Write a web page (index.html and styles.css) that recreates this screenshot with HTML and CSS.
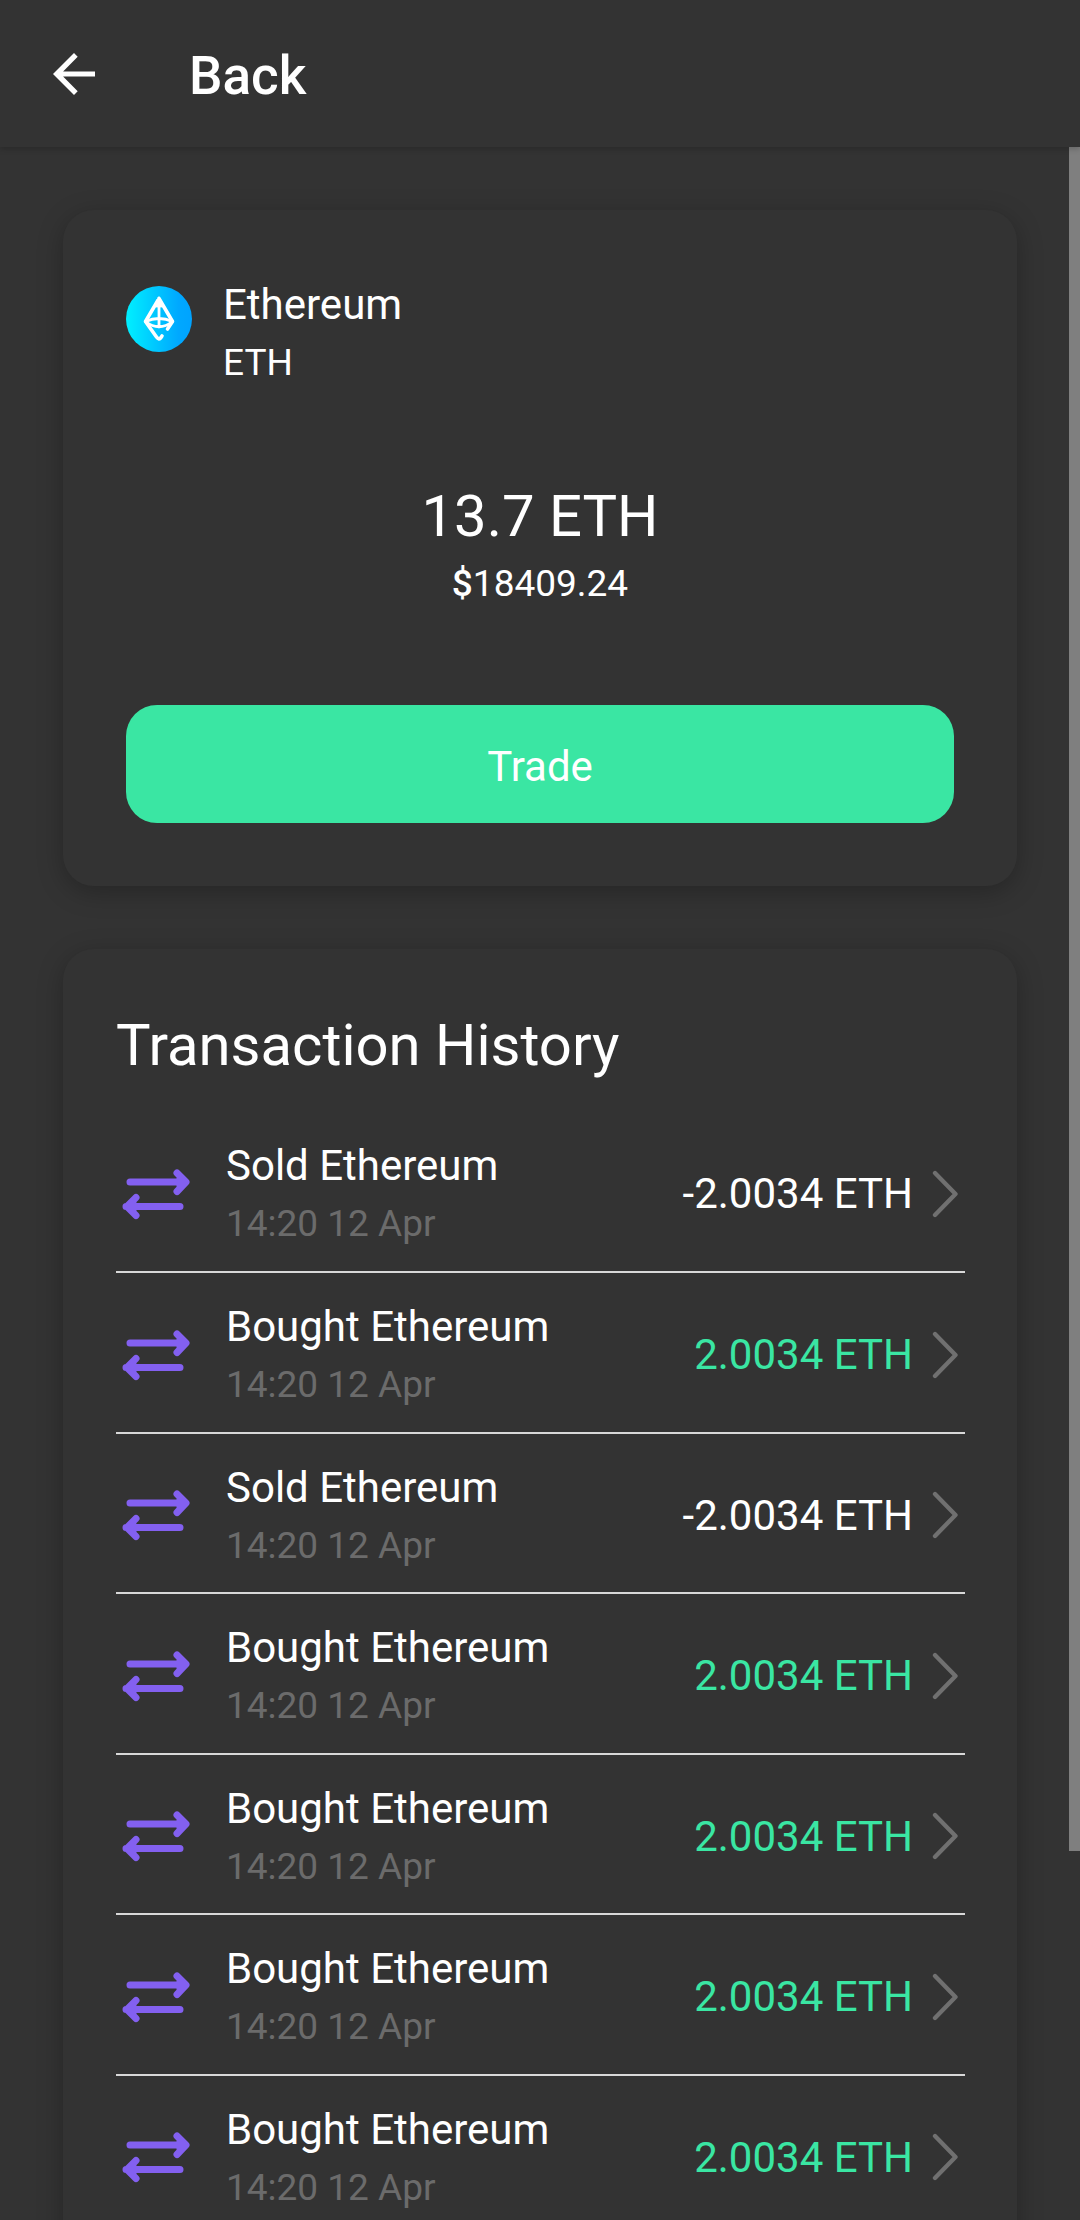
FILE: index.html
```html
<!DOCTYPE html>
<html lang="en">
<head>
<meta charset="utf-8">
<meta name="viewport" content="width=device-width, initial-scale=1">
<title>Ethereum</title>
<link rel="stylesheet" href="styles.css">
</head>
<body>
<svg class="sprite" aria-hidden="true">
  <symbol id="swap" viewBox="0 0 78 78">
    <g fill="none" stroke="#8360f0" stroke-width="7" stroke-linecap="round" stroke-linejoin="round">
      <path d="M14 27H68M61 18L70 27L61 36.500M64 23V31"/>
      <path d="M64 51.500H10M20 42.500L11 51.500L20 60.500M17 47.500V55.500"/>
    </g>
  </symbol>
  <symbol id="chevron" viewBox="0 0 26 48">
    <path d="M3 3L23.500 24L3 45" fill="none" stroke="#707070" stroke-width="4.300" stroke-linecap="round" stroke-linejoin="round"/>
  </symbol>
</svg>
<header class="app-bar">
  <button class="back" type="button" aria-label="Go back">
    <svg viewBox="0 0 42 42" width="42" height="42" aria-hidden="true"><path d="M42 18.400H10.100L24.700 3.700L21 0L0 21L21 42L24.700 38.300L10.100 23.600H42Z" fill="#fff"/></svg>
  </button>
  <h1 class="app-title">Back</h1>
</header>
<main class="content">
  <section class="card balance">
    <div class="coin">
      <svg class="coin-logo" viewBox="0 0 66 66" aria-hidden="true">
        <defs><linearGradient id="coin-fill" x1="0" x2="1" y1="0" y2="0"><stop offset="0" stop-color="#00f0ff"/><stop offset=".5" stop-color="#00c2ff"/><stop offset=".8" stop-color="#00a8ff"/><stop offset="1" stop-color="#00a3ff"/></linearGradient></defs>
        <circle cx="33" cy="33" r="33" fill="url(#coin-fill)"/>
        <g fill="none" stroke="#fff" stroke-width="3.600" stroke-linecap="round" stroke-linejoin="round">
          <path d="M33 12.500L19.500 35.500L30.500 51Q33 54.500 35 51.500L36 50M33 12.500L46.500 35.500L41.500 43"/>
          <path d="M33 13V41M19.500 35.500Q33 29.500 46.500 35.500Q33 46 19.500 35.500" stroke-width="2.800"/>
          <path d="M33 14L31 20M33 14L35 20" stroke-width="3"/>
        </g>
      </svg>
      <div class="stack">
        <h2 class="text-body">Ethereum</h2>
        <p class="text-small">ETH</p>
      </div>
    </div>
    <div class="total">
      <p class="text-large">13.7 ETH</p>
      <p class="text-small"><span class="currency">$</span>18409.24</p>
    </div>
    <button class="trade" type="button">Trade</button>
  </section>
  <section class="card history">
    <h2 class="text-large">Transaction History</h2>
    <ul class="rows">
      <li><a class="row" href="#"><svg class="swap" aria-hidden="true"><use href="#swap"/></svg><span class="stack"><span class="text-body">Sold Ethereum</span><time class="text-small date">14:20 12 Apr</time></span><span class="amount">-2.0034 ETH</span><svg class="chevron" aria-hidden="true"><use href="#chevron"/></svg></a></li>
      <li><a class="row" href="#"><svg class="swap" aria-hidden="true"><use href="#swap"/></svg><span class="stack"><span class="text-body">Bought Ethereum</span><time class="text-small date">14:20 12 Apr</time></span><span class="amount gain">2.0034 ETH</span><svg class="chevron" aria-hidden="true"><use href="#chevron"/></svg></a></li>
      <li><a class="row" href="#"><svg class="swap" aria-hidden="true"><use href="#swap"/></svg><span class="stack"><span class="text-body">Sold Ethereum</span><time class="text-small date">14:20 12 Apr</time></span><span class="amount">-2.0034 ETH</span><svg class="chevron" aria-hidden="true"><use href="#chevron"/></svg></a></li>
      <li><a class="row" href="#"><svg class="swap" aria-hidden="true"><use href="#swap"/></svg><span class="stack"><span class="text-body">Bought Ethereum</span><time class="text-small date">14:20 12 Apr</time></span><span class="amount gain">2.0034 ETH</span><svg class="chevron" aria-hidden="true"><use href="#chevron"/></svg></a></li>
      <li><a class="row" href="#"><svg class="swap" aria-hidden="true"><use href="#swap"/></svg><span class="stack"><span class="text-body">Bought Ethereum</span><time class="text-small date">14:20 12 Apr</time></span><span class="amount gain">2.0034 ETH</span><svg class="chevron" aria-hidden="true"><use href="#chevron"/></svg></a></li>
      <li><a class="row" href="#"><svg class="swap" aria-hidden="true"><use href="#swap"/></svg><span class="stack"><span class="text-body">Bought Ethereum</span><time class="text-small date">14:20 12 Apr</time></span><span class="amount gain">2.0034 ETH</span><svg class="chevron" aria-hidden="true"><use href="#chevron"/></svg></a></li>
      <li><a class="row" href="#"><svg class="swap" aria-hidden="true"><use href="#swap"/></svg><span class="stack"><span class="text-body">Bought Ethereum</span><time class="text-small date">14:20 12 Apr</time></span><span class="amount gain">2.0034 ETH</span><svg class="chevron" aria-hidden="true"><use href="#chevron"/></svg></a></li>
    </ul>
  </section>
</main>
<div class="scroll-thumb" aria-hidden="true"></div>
</body>
</html>
```
FILE: styles.css
```css
* {
  box-sizing: border-box;
}

body {
  margin: 0;
  height: 100vh;
  display: flex;
  flex-direction: column;
  position: relative;
  overflow: hidden;
  background: #333;
  color: #fff;
  font-family: Roboto, "Liberation Sans", sans-serif;
}

h1, h2, p, ul {
  margin: 0;
  padding: 0;
  font-weight: 400;
}

button {
  border: 0;
  padding: 0;
  font: inherit;
  color: inherit;
  background: none;
  cursor: pointer;
}

.sprite {
  display: none;
}

.app-bar {
  flex: none;
  display: flex;
  align-items: center;
  gap: 94px;
  height: 147px;
  padding: 0 53px;
  background: #333;
  box-shadow: 0 2px 6px rgba(0, 0, 0, 0.2);
  z-index: 1;
}

.back svg {
  display: block;
}

.app-title {
  font-size: 53px;
  line-height: 62px;
  font-weight: 500;
  padding-top: 4px;
}

.content {
  flex: 1;
  min-height: 0;
  display: flex;
  flex-direction: column;
  gap: 63px;
  padding: 63px;
  overflow-y: auto;
  scrollbar-width: none;
}

.card {
  flex: none;
  border-radius: 31px;
  background: #333;
  box-shadow: 0 6px 26px rgba(0, 0, 0, 0.26);
}

.balance {
  display: flex;
  flex-direction: column;
  padding: 63px;
}

.coin {
  display: flex;
  gap: 31px;
  padding-top: 7px;
}

.coin-logo {
  width: 66px;
  height: 66px;
  margin-top: 6px;
}

.stack {
  display: flex;
  flex-direction: column;
  gap: 12px;
}

.text-large {
  font-size: 58px;
  line-height: 68px;
}

.text-body,
.amount {
  font-size: 42px;
  line-height: 49px;
}

.text-small {
  font-size: 37px;
  line-height: 44px;
}

.total {
  display: flex;
  flex-direction: column;
  align-items: center;
  gap: 12px;
  margin-top: 97px;
}

.currency {
  font-weight: 500;
}

.trade {
  height: 118px;
  margin-top: 99px;
  padding-top: 4px;
  border-radius: 31px;
  background: #3ae6a3;
  font-size: 42px;
  line-height: 49px;
}

.history {
  padding: 62px 52px 52px 53px;
}

.rows {
  list-style: none;
  padding-top: 33px;
}

.row {
  display: flex;
  align-items: center;
  height: 161px;
  padding: 29px 7px 25px 0;
  border-bottom: 2px solid #d8d8d8;
  color: inherit;
  text-decoration: none;
}

li:nth-child(2n + 3) .row {
  height: 160px;
}

.swap {
  width: 78px;
  height: 78px;
  margin-right: 32px;
}

.date {
  color: #6b6b6b;
}

.amount {
  margin-left: auto;
}

.gain {
  color: #3ae6a3;
}

.chevron {
  width: 26px;
  height: 48px;
  margin-left: 19px;
}

.scroll-thumb {
  position: absolute;
  top: 147px;
  right: 0;
  width: 11px;
  height: calc((100vh - 147px) * 0.822);
  background: #7f7f7f;
}
```
